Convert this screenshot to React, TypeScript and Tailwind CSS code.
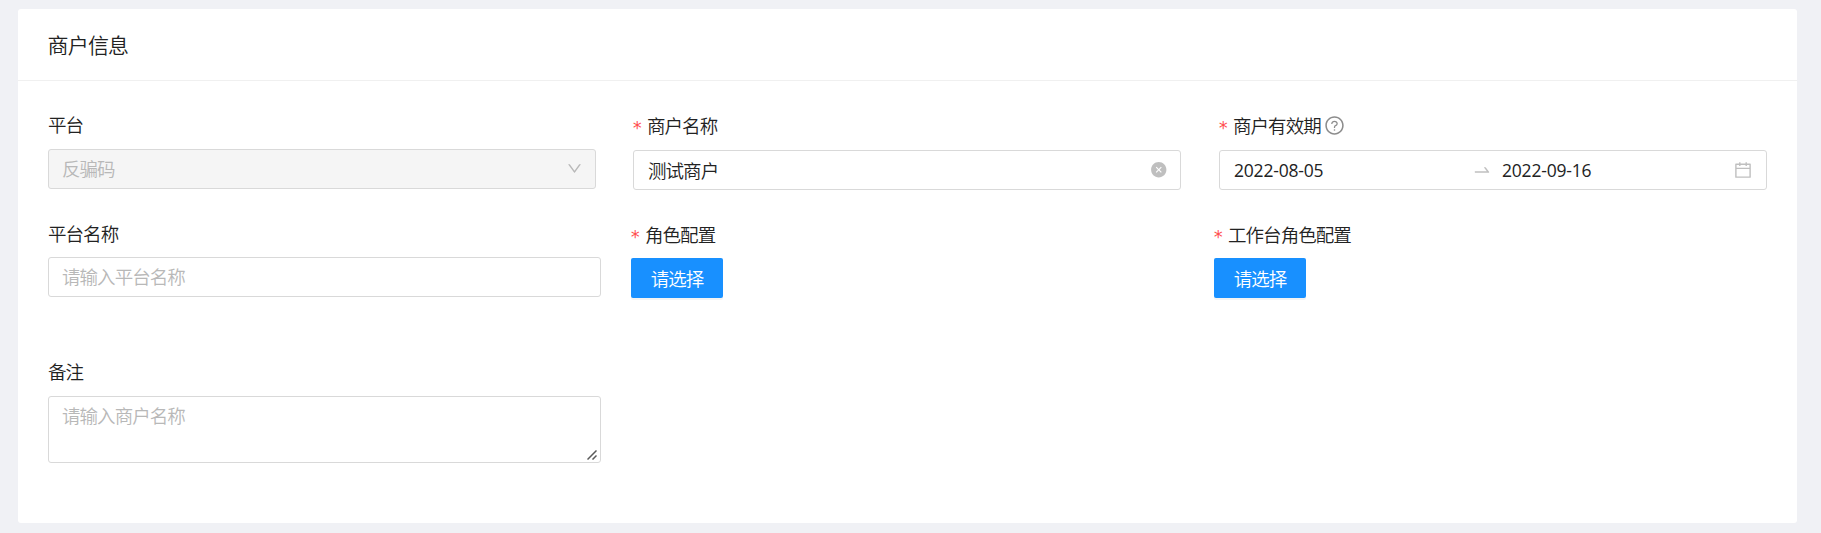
import type { ReactNode } from 'react';
import {
  AiFillCloseCircle,
  AiOutlineCalendar,
  AiOutlineDown,
  AiOutlineQuestionCircle,
  AiOutlineSwapRight,
} from 'react-icons/ai';

function Label({ children, required = false, className = '' }: { children: ReactNode; required?: boolean; className?: string }) {
  return (
    <div className={`flex items-center whitespace-nowrap ${className}`}>
      {required && (
        <span className="mr-[6px] -ml-px w-[9px] pt-[6px] font-['DejaVu_Sans_Mono'] text-[17.5px] leading-none font-normal tracking-normal text-[#ff4d4f]">*</span>
      )}
      {children}
    </div>
  );
}

function SelectButton() {
  return (
    <button className="block h-10 w-[92px] rounded-xs bg-[#1890ff] pt-px text-center text-white shadow-[0_2px_0_rgba(0,0,0,0.045)]">
      请选择
    </button>
  );
}

export default function App() {
  return (
    <div className="h-[533px] w-[1821px] bg-[#f0f1f5] pt-[9px] pl-[18px] font-['Open_Sans','Noto_Sans_CJK_SC',sans-serif] text-[18.5px] leading-[27px] font-[350] tracking-[-0.95px] text-[#222222]">
      <section className="h-[514px] w-[1779px] rounded-[3px] bg-white">
        <header className="flex h-[72px] items-center border-b border-[#f0f0f0] px-[29.5px] pt-[2px] text-[21px] tracking-[-0.8px]">商户信息</header>

        <div className="flex items-start px-[30px] pt-[22px]">
          <div className="w-[585px]">
            <Label className="h-[46px] pb-[4px]">平台</Label>
            <div className="flex h-10 w-[548px] items-center justify-between rounded-[3px] border border-[#d9d9d9] bg-[#f5f5f5] pr-[12px] pb-px pl-[13px] text-[#b8b8b8]">
              <span>反骗码</span>
              <AiOutlineDown className="mb-px size-[17px]" />
            </div>
          </div>
          <div className="w-[586px] pt-px">
            <Label required className="h-[46px] pb-[3px]">商户名称</Label>
            <div className="flex h-10 w-[548px] items-center justify-between rounded-[3px] border border-[#d9d9d9] pr-[13px] pl-[14px]">
              <span>测试商户</span>
              <AiFillCloseCircle className="size-[17.5px] text-black/25" />
            </div>
          </div>
          <div className="pt-px">
            <Label required className="h-[46px] pb-[3px]">
              商户有效期
              <AiOutlineQuestionCircle className="ml-[3px] size-[21px] text-black/45" />
            </Label>
            <div className="flex h-10 w-[548px] items-center rounded-[3px] border border-[#d9d9d9] pr-[13px] pl-[14px] text-[17.5px] font-normal tracking-[-0.2px]">
              <span className="w-[238px]">2022-08-05</span>
              <AiOutlineSwapRight className="mr-[10px] size-5 text-black/25" />
              <span className="flex-1">2022-09-16</span>
              <AiOutlineCalendar className="mb-px size-5 text-black/25" />
            </div>
          </div>
        </div>

        <div className="flex items-start px-[30px] pt-[22px]">
          <div className="w-[583px]">
            <Label className="h-[45px] pb-[2px]">平台名称</Label>
            <div className="flex h-10 w-[553px] items-center rounded-[3px] border border-[#d9d9d9] px-[13px] pb-px text-[#b8b8b8]">
              请输入平台名称
            </div>
          </div>
          <div className="w-[583px] pt-px">
            <Label required className="h-[45px] pb-[2px]">角色配置</Label>
            <SelectButton />
          </div>
          <div className="pt-px">
            <Label required className="h-[45px] pb-[2px]">工作台角色配置</Label>
            <SelectButton />
          </div>
        </div>

        <div className="px-[30px] pt-[51px]">
          <Label className="h-[47px] pb-[2px]">备注</Label>
          <div className="relative h-[67px] w-[553px] rounded-[3px] border border-[#d9d9d9] px-[13px] pt-[5px] text-[#b8b8b8]">
            请输入商户名称
            <svg className="absolute right-[3px] bottom-[2px] size-[10px]" viewBox="0 0 10 10" fill="none" stroke="#5a5a5a" strokeWidth="1.5">
              <path d="M0.5 9.5 9.5 0.5M5.5 9.5 9.5 5.5" />
            </svg>
          </div>
        </div>
      </section>
    </div>
  );
}
